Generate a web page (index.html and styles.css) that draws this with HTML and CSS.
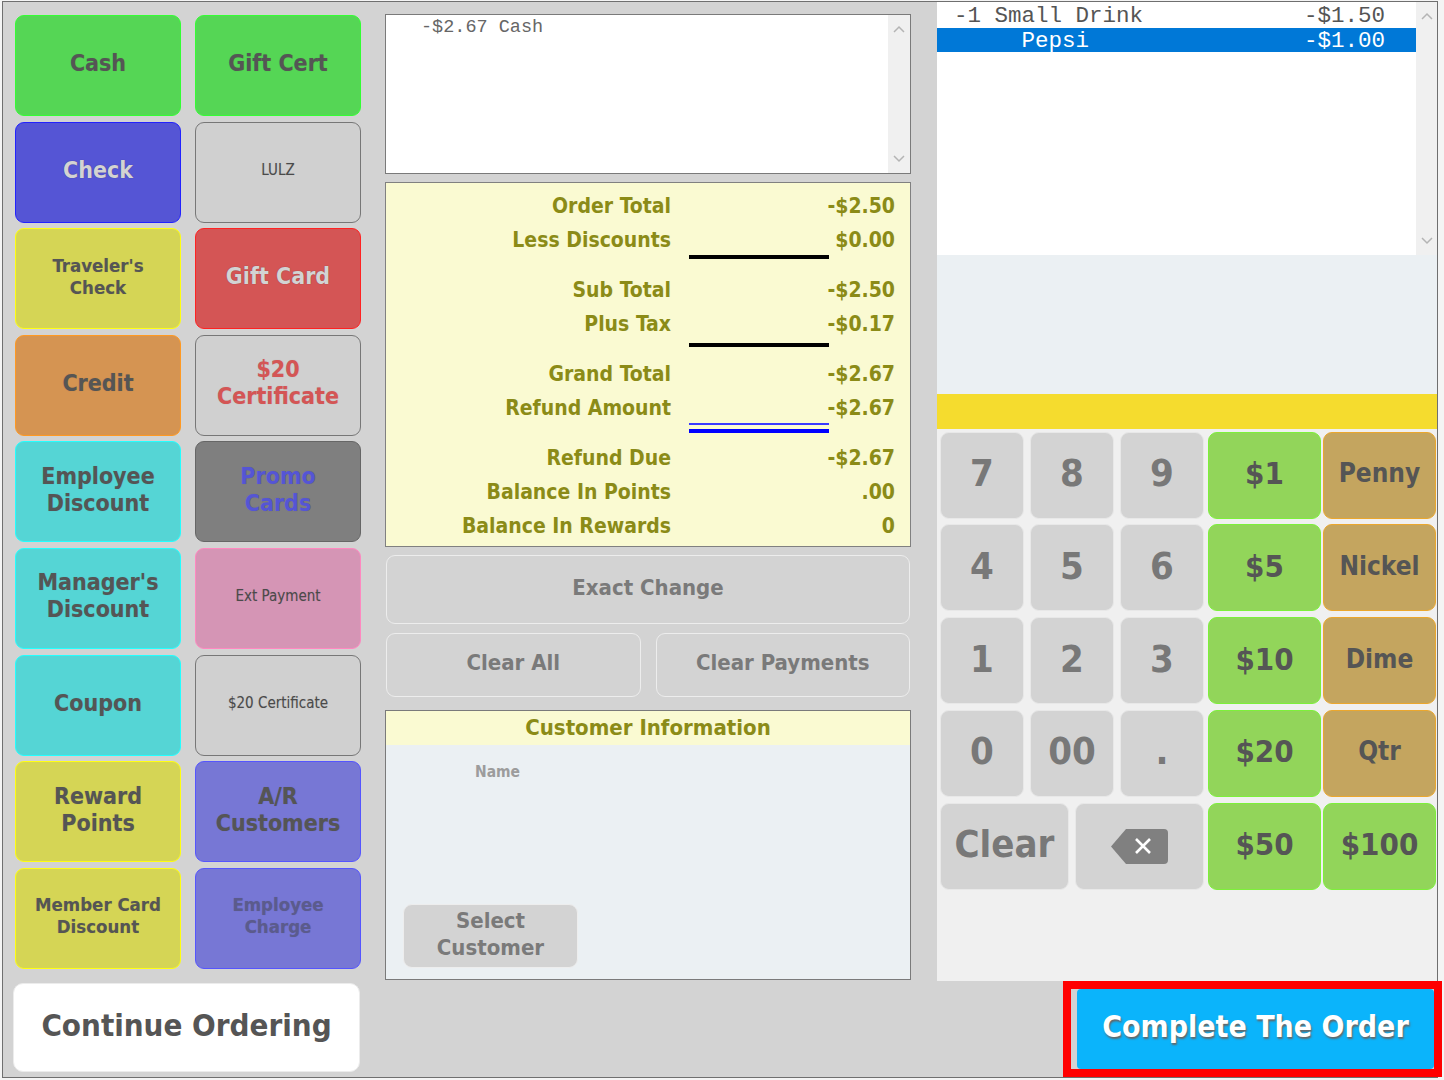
FILE: index.html
```html
<!DOCTYPE html>
<html lang="en">
<head>
    <meta charset="UTF-8">
    <title>Tender</title>
    <link rel="stylesheet" href="styles.css">
</head>
<body>
    <div class="window">
        <!-- tender types -->
        <div class="tenders">
            <div class="tender-grid">
                <button class="tender green">Cash</button>
                <button class="tender green">Gift Cert</button>
                <button class="tender blue light-text">Check</button>
                <button class="tender gray small">LULZ</button>
                <button class="tender yellow medium">Traveler's<br>Check</button>
                <button class="tender red light-text">Gift Card</button>
                <button class="tender orange">Credit</button>
                <button class="tender gray red-text">$20<br>Certificate</button>
                <button class="tender cyan">Employee<br>Discount</button>
                <button class="tender dark promo-text">Promo<br>Cards</button>
                <button class="tender cyan">Manager's<br>Discount</button>
                <button class="tender pink small">Ext Payment</button>
                <button class="tender cyan">Coupon</button>
                <button class="tender gray small">$20 Certificate</button>
                <button class="tender yellow">Reward<br>Points</button>
                <button class="tender violet">A/R<br>Customers</button>
                <button class="tender yellow medium">Member Card<br>Discount</button>
                <button class="tender violet medium charge-text">Employee<br>Charge</button>
            </div>
            <button class="continue">Continue Ordering</button>
        </div>

        <!-- payments and totals -->
        <div class="middle">
            <div class="pay-list">
                <div class="pay-lines">
                    <div class="pay-line">-$2.67 Cash</div>
                </div>
                <div class="scrollbar">
                    <svg width="12" height="8" viewBox="0 0 12 8"><polyline points="1,7 6,2 11,7" fill="none" stroke="#b4b4b4" stroke-width="1.5"/></svg>
                    <svg width="12" height="8" viewBox="0 0 12 8"><polyline points="1,1 6,6 11,1" fill="none" stroke="#b4b4b4" stroke-width="1.5"/></svg>
                </div>
            </div>

            <div class="summary">
                <div class="sum-row"><span class="sum-label">Order Total</span><span class="sum-value">-$2.50</span></div>
                <div class="sum-row"><span class="sum-label">Less Discounts</span><span class="sum-value">$0.00</span></div>
                <div class="rule rule-first"></div>
                <div class="sum-row"><span class="sum-label">Sub Total</span><span class="sum-value">-$2.50</span></div>
                <div class="sum-row"><span class="sum-label">Plus Tax</span><span class="sum-value">-$0.17</span></div>
                <div class="rule rule-second"></div>
                <div class="sum-row"><span class="sum-label">Grand Total</span><span class="sum-value">-$2.67</span></div>
                <div class="sum-row"><span class="sum-label">Refund Amount</span><span class="sum-value">-$2.67</span></div>
                <div class="double-rule"></div>
                <div class="sum-row"><span class="sum-label">Refund Due</span><span class="sum-value">-$2.67</span></div>
                <div class="sum-row"><span class="sum-label">Balance In Points</span><span class="sum-value">.00</span></div>
                <div class="sum-row"><span class="sum-label">Balance In Rewards</span><span class="sum-value">0</span></div>
            </div>

            <button class="plain-btn exact">Exact Change</button>
            <div class="clear-row">
                <button class="plain-btn">Clear All</button>
                <button class="plain-btn">Clear Payments</button>
            </div>

            <div class="customer">
                <div class="customer-head">Customer Information</div>
                <div class="customer-body">
                    <div class="name-label">Name</div>
                    <button class="plain-btn select-customer">Select<br>Customer</button>
                </div>
            </div>
        </div>

        <!-- order and keypad -->
        <div class="register">
            <div class="order-list">
                <div class="order-lines">
                    <div class="order-line"><span>-1 Small Drink</span><span>-$1.50</span></div>
                    <div class="order-line selected"><span>     Pepsi</span><span>-$1.00</span></div>
                </div>
                <div class="scrollbar">
                    <svg width="12" height="8" viewBox="0 0 12 8"><polyline points="1,7 6,2 11,7" fill="none" stroke="#b4b4b4" stroke-width="1.5"/></svg>
                    <svg width="12" height="8" viewBox="0 0 12 8"><polyline points="1,1 6,6 11,1" fill="none" stroke="#b4b4b4" stroke-width="1.5"/></svg>
                </div>
            </div>
            <div class="order-info"></div>
            <div class="status-bar"></div>

            <div class="keypad">
                <div class="digits">
                    <button class="key">7</button>
                    <button class="key">8</button>
                    <button class="key">9</button>
                    <button class="key">4</button>
                    <button class="key">5</button>
                    <button class="key">6</button>
                    <button class="key">1</button>
                    <button class="key">2</button>
                    <button class="key">3</button>
                    <button class="key">0</button>
                    <button class="key">00</button>
                    <button class="key">.</button>
                    <div class="edit-row">
                        <button class="key">Clear</button>
                        <button class="key backspace">
                            <svg width="57" height="35" viewBox="0 0 57 35">
                                <path d="M0 17.5 L15 0 H53 Q57 0 57 4 V31 Q57 35 53 35 H15 Z" fill="#808080"/>
                                <path d="M25 10 L39 24 M39 10 L25 24" stroke="#fff" stroke-width="2.6"/>
                            </svg>
                        </button>
                    </div>
                </div>
                <div class="money">
                    <button class="bill">$1</button>
                    <button class="coin">Penny</button>
                    <button class="bill">$5</button>
                    <button class="coin">Nickel</button>
                    <button class="bill">$10</button>
                    <button class="coin">Dime</button>
                    <button class="bill">$20</button>
                    <button class="coin">Qtr</button>
                    <button class="bill">$50</button>
                    <button class="bill">$100</button>
                </div>
            </div>

            <div class="footer">
                <div class="complete-frame">
                    <button class="complete">Complete The Order</button>
                </div>
            </div>
        </div>
    </div>
</body>
</html>
```

FILE: styles.css
```css
body {
    margin: 0;
    background: #f4f4f4;
    font-family: "DejaVu Sans Condensed", "Liberation Sans", sans-serif;
}

button {
    font: inherit;
    margin: 0;
    padding: 0;
    cursor: pointer;
}

.window {
    box-sizing: border-box;
    width: 1436px;
    height: 1077px;
    margin: 1px 0 0 2px;
    border: 1px solid #6f6f6f;
    background: #d3d3d3;
    display: flex;
    align-items: stretch;
}

/* left: tender buttons */
.tenders {
    width: 346px;
    margin-left: 12px;
    padding-top: 13px;
}

.tender-grid {
    display: grid;
    grid-template-columns: 166px 166px;
    grid-auto-rows: 101px;
    column-gap: 14px;
    row-gap: 5.6px;
}

.tender {
    box-sizing: border-box;
    border: 1px solid;
    border-radius: 9px;
    padding-bottom: 4px;
    font-weight: bold;
    font-size: 23px;
    line-height: 27px;
    color: #555;
    display: flex;
    align-items: center;
    justify-content: center;
    text-align: center;
    text-shadow: 0 0 1px rgba(0, 0, 0, 0.15);
}

.tender.medium {
    font-size: 18.5px;
    line-height: 22px;
}

.tender.small {
    font-size: 15px;
    font-weight: normal;
    color: #4a4a4a;
}

.green { background: #55d655; border-color: #33ff33; }
.blue { background: #5555d5; border-color: #2222ff; }
.gray { background: #d0d0d0; border-color: #777; }
.yellow { background: #d5d555; border-color: #ffff11; }
.red { background: #d45555; border-color: #ff2222; }
.orange { background: #d59452; border-color: #ff9922; }
.cyan { background: #55d5d5; border-color: #22ffff; }
.dark { background: #7f7f7f; border-color: #666; }
.pink { background: #d595b5; border-color: #ff88c0; }
.violet { background: #7777d5; border-color: #5555ff; }

.light-text { color: #d3d3d3; text-shadow: 0 0 1px rgba(0, 0, 0, 0.4); }
.red-text { color: #d45555; }
.promo-text { color: #5555d5; }
.charge-text { color: #5b5b8c; }

.continue {
    display: block;
    width: 347px;
    height: 89px;
    margin: 14px 0 0 -2px;
    padding-bottom: 4px;
    background: #fff;
    border: 1px solid #ececec;
    border-radius: 10px;
    color: #555;
    font-weight: bold;
    font-size: 31px;
}

/* middle: payments, totals, customer */
.middle {
    width: 526px;
    margin-left: 24px;
    padding-top: 12px;
}

.pay-list {
    box-sizing: border-box;
    height: 160px;
    border: 1px solid #7a7a7a;
    background: #fff;
    display: flex;
}

.pay-lines {
    flex: 1;
    padding-top: 2px;
}

.pay-line {
    font-family: "Liberation Mono", monospace;
    font-size: 18.5px;
    line-height: 22px;
    color: #666;
    padding-left: 35px;
}

.scrollbar {
    width: 22px;
    background: #f0f0f0;
    display: flex;
    flex-direction: column;
    justify-content: space-between;
    align-items: center;
    padding: 10px 0;
}

.summary {
    box-sizing: border-box;
    height: 365px;
    margin-top: 8px;
    padding-top: 6px;
    border: 1px solid #808080;
    background: #fafad2;
    color: #8b8b17;
    font-weight: bold;
    font-size: 21px;
}

.sum-row {
    display: flex;
    height: 34px;
    line-height: 34px;
}

.sum-label {
    width: 285px;
    text-align: right;
}

.sum-value {
    flex: 1;
    text-align: right;
    padding-right: 15px;
}

.rule {
    width: 140px;
    margin-left: 303px;
    border-top: 4px solid #000;
}

.rule-first {
    margin-top: -2px;
    height: 14px;
}

.rule-second {
    margin-top: 2px;
    height: 10px;
}

.double-rule {
    width: 140px;
    height: 4px;
    margin: -2px 0 8px 303px;
    border-top: 2px solid #3a3aff;
    border-bottom: 4px solid #0000ff;
}

.plain-btn {
    box-sizing: border-box;
    background: #d3d3d3;
    border: 1px solid #ededed;
    border-radius: 9px;
    padding-bottom: 5px;
    color: #7a7a7a;
    font-weight: bold;
    font-size: 22px;
}

.exact {
    display: block;
    width: 524px;
    height: 69px;
    margin: 8px 0 0 1px;
}

.clear-row {
    display: flex;
    gap: 15px;
    margin: 9px 1px 0 1px;
    height: 64px;
}

.clear-row .plain-btn {
    flex: 1;
}

.customer {
    box-sizing: border-box;
    height: 270px;
    margin-top: 13px;
    border: 1px solid #7a7a7a;
    display: flex;
    flex-direction: column;
}

.customer-head {
    height: 34px;
    line-height: 34px;
    background: #fafad2;
    color: #8b8b17;
    font-weight: bold;
    font-size: 22px;
    text-align: center;
}

.customer-body {
    flex: 1;
    background: #ebf0f3;
    display: flex;
    flex-direction: column;
    align-items: flex-start;
    padding: 0 0 11px 17px;
}

.name-label {
    margin: 18px 0 0 72px;
    color: #9c9c9c;
    font-weight: bold;
    font-size: 15.5px;
}

.select-customer {
    margin-top: auto;
    width: 175px;
    height: 64px;
    line-height: 27px;
}

/* right: order lines and keypad */
.register {
    width: 500px;
    margin-left: 26px;
    display: flex;
    flex-direction: column;
}

.order-list {
    height: 253px;
    background: #fff;
    display: flex;
}

.order-lines {
    flex: 1;
}

.order-line {
    box-sizing: border-box;
    display: flex;
    justify-content: space-between;
    height: 25px;
    line-height: 25px;
    padding: 2px 31px 0 17px;
    font-family: "Liberation Mono", monospace;
    font-size: 22.5px;
    color: #555;
    white-space: pre;
}

.order-line.selected {
    margin-top: 1px;
    height: 24px;
    padding-top: 1px;
    background: #0078d7;
    color: #fff;
}

.order-list .scrollbar {
    width: 21px;
    padding: 10px 0;
}

.order-info {
    height: 139px;
    background: #ebf0f3;
}

.status-bar {
    height: 35px;
    background: #f5dc2e;
}

.keypad {
    height: 553px;
    box-sizing: border-box;
    padding: 3px 0 0 3px;
    background: #f0f0f0;
    display: flex;
    gap: 4px;
}

.digits,
.money {
    display: grid;
    grid-auto-rows: 87px;
    row-gap: 5.8px;
    align-content: start;
}

.digits {
    grid-template-columns: 84px 84px 84px;
    column-gap: 6px;
}

.money {
    grid-template-columns: 113px 113px;
    column-gap: 2px;
}

.edit-row {
    grid-column: 1 / 4;
    display: grid;
    grid-template-columns: 1fr 1fr;
    gap: 6px;
}

.key,
.bill,
.coin {
    box-sizing: border-box;
    border: 1px solid;
    border-radius: 9px;
    padding-bottom: 4px;
    font-weight: bold;
    display: flex;
    align-items: center;
    justify-content: center;
}

.key {
    background: #d3d3d3;
    border-color: #e8e8e8;
    color: #787878;
    font-size: 38px;
}

.key.backspace {
    padding-bottom: 0;
}

.bill {
    background: #92d55a;
    border-color: #7df03a;
    color: #555;
    font-size: 31px;
}

.coin {
    background: #c4a55f;
    border-color: #eba72d;
    color: #555;
    font-size: 26px;
}

.footer {
    flex: 1;
    display: flex;
    justify-content: flex-end;
}

.complete-frame {
    width: 357px;
    height: 80px;
    margin-right: -5px;
    border: 8px solid #ff0000;
    padding-left: 6px;
    background: #d3d3d3;
    display: flex;
}

.complete {
    width: 357px;
    border: none;
    border-radius: 4px;
    padding-bottom: 6px;
    background: #0bb4fb;
    color: #fff;
    font-weight: bold;
    font-size: 30px;
    text-shadow: 1px 2px 2px #666;
}
```
